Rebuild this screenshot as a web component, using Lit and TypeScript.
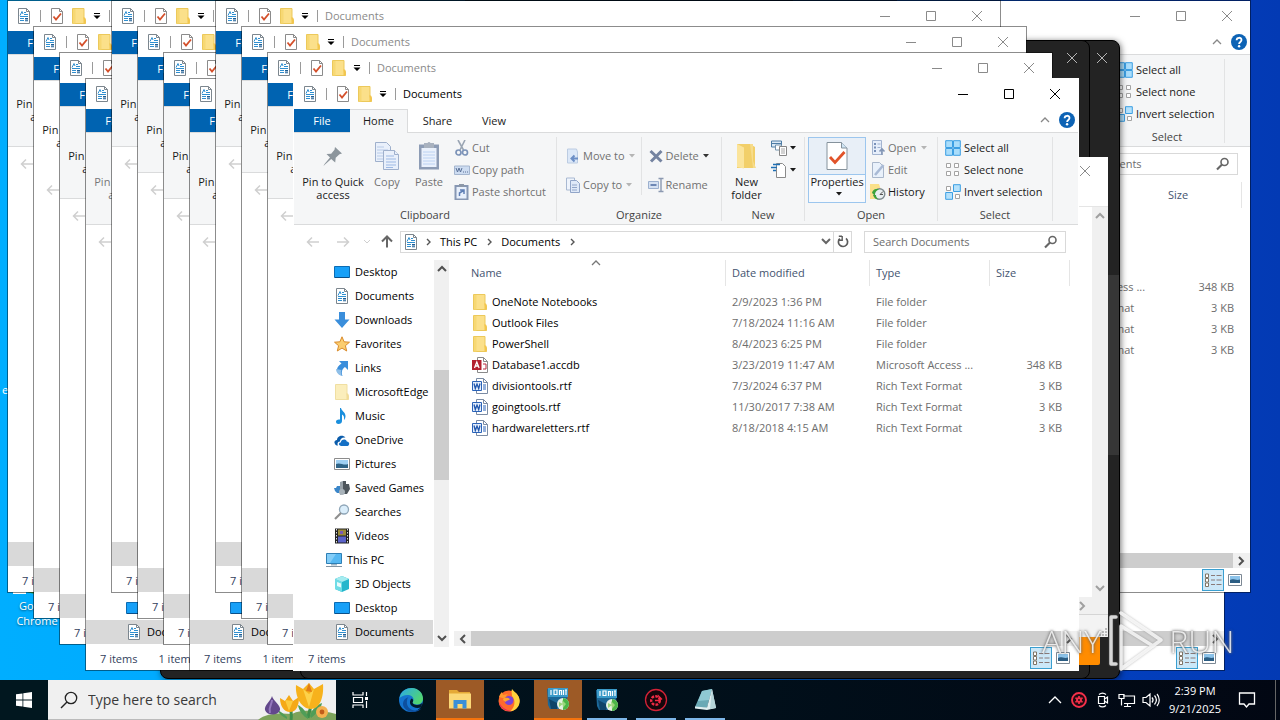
import { LitElement, html, svg, css, nothing } from "lit";
import { customElement, property } from "lit/decorators.js";
import { classMap } from "lit/directives/class-map.js";
import { styleMap } from "lit/directives/style-map.js";

/* ---------- icons ---------- */

const glyphs: Record<string, [number, number, any]> = {
  doc: [16, 16, svg`<path d="M2.5.5h8l3 3v12h-11z" fill="#fff" stroke="#7c868e"/><path d="M10.500.5v3h3" fill="none" stroke="#7c868e"/><path d="M4 7.500l2-4 1 2.500M8 4.500h2M8 6.500h4M4 8.500h8M4 10.500h4M4 12.500h4" fill="none" stroke="#2f8fd0"/><path d="M9 10h3v1.500H9zM9 12.300h3v1H9z" fill="#1d5d94"/>`],
  check: [16, 16, svg`<path d="M2.500.5h8l3 3v12h-11z" fill="#fff" stroke="#8b8b8b"/><path d="M10.500.5v3h3" fill="none" stroke="#8b8b8b"/><path d="M4.500 8.500L7 11.500l5-6" fill="none" stroke="#d4502b" stroke-width="1.800"/>`],
  folder: [16, 16, svg`<path d="M1.500.5H13v11h1.500v4h-13z" fill="#fbe08a" stroke="#ecc95b"/><path d="M12.500 9v6.500h2V10z" fill="#f3c64d"/><path d="M2 1h2.500v14.500H2z" fill="#f7d873"/>`],
  folderPale: [16, 16, svg`<path d="M1.500.5H13v11h1.500v4h-13z" fill="#fbeebc" stroke="#f0dfa2"/><path d="M12.500 9v6.500h2V10z" fill="#f1dc98"/>`],
  qatCaret: [8, 6, svg`<path d="M1 0h6v1H1zM.5 2.500h7L4 6z" fill="currentColor"/>`],
  caret: [6, 4, svg`<path d="M0 0h6L3 3.500z" fill="currentColor"/>`],
  min: [12, 12, svg`<path d="M1 6.500h10" stroke="currentColor"/>`],
  max: [12, 12, svg`<path d="M1.500 1.500h9v9h-9z" fill="none" stroke="currentColor"/>`],
  close: [12, 12, svg`<path d="M1 1l10 10M11 1L1 11" stroke="currentColor"/>`],
  up: [10, 6, svg`<path d="M1 5l4-4 4 4" fill="none" stroke="currentColor" stroke-width="1.300"/>`],
  down: [10, 7, svg`<path d="M1 1l4 4 4-4" fill="none" stroke="currentColor" stroke-width="2"/>`],
  upBold: [10, 7, svg`<path d="M1 6l4-4 4 4" fill="none" stroke="currentColor" stroke-width="2"/>`],
  left: [7, 10, svg`<path d="M6 1L2 5l4 4" fill="none" stroke="currentColor" stroke-width="2"/>`],
  right: [7, 10, svg`<path d="M1 1l4 4-4 4" fill="none" stroke="currentColor" stroke-width="2"/>`],
  crumb: [5, 8, svg`<path d="M1 1l3 3-3 3" fill="none" stroke="#555" stroke-width="1.400"/>`],
  help: [16, 16, svg`<circle cx="8" cy="8" r="8" fill="#0d63b5"/><path d="M5.600 6.200C5.600 3 10.500 3 10.500 6c0 2-2.400 1.900-2.400 4" fill="none" stroke="#fff" stroke-width="1.800"/><circle cx="8.100" cy="12.300" r="1.200" fill="#fff"/>`],
  pin: [22, 22, svg`<path d="M13 2l7 6.500-2.500.8-3.800 3.500-.5 4.700-4-3.600L3 19.500 1.500 21l1-2L8 12.500 4.500 9l4.700-.3 3.300-4z" fill="#8c959c"/>`],
  copy: [26, 28, svg`<g stroke="#9fb0cc" fill="#e9f0fb"><path d="M1.500.5h11l4 4v15h-15z"/><path d="M3 5h7M3 8h11M3 11h11M3 14h11M3 17h8" stroke="#b8cbe8"/><path d="M9.500 8.500h11l4 4v15h-15z"/><path d="M20.500 8.500v4h4"/><path d="M12 14h8M12 17h10M12 20h10M12 23h10M12 25.500h7" stroke="#9db9e4"/></g>`],
  paste: [22, 30, svg`<path d="M1 3.500h20v25H1z" fill="#8d9cb5"/><path d="M3.500 7h15v19h-15z" fill="#eaf1fc"/><path d="M6 2h3.500a1.700 1.700 0 013 0H16v5H6z" fill="#a9b2bf"/><path d="M5 11h12M5 14h12M5 17h12M5 20h12M5 23h12" stroke="#bcd2f2"/>`],
  cut: [16, 16, svg`<path d="M4 0l5.500 10M11 0L6 10" stroke="#9aa5b3" stroke-width="1.600"/><circle cx="4.500" cy="12.500" r="2.500" fill="none" stroke="#7c93b8" stroke-width="1.700"/><circle cx="11" cy="12.500" r="2.500" fill="none" stroke="#7c93b8" stroke-width="1.700"/>`],
  copyPath: [16, 16, svg`<path d="M.5 4h15v8.500H.5z" fill="#cddcf1" stroke="#a5b6cf"/><path d="M2 6l1.500 4L5 6l1.500 4L8 6" fill="none" stroke="#5a7197"/><path d="M9 10h5" stroke="#5a7197" stroke-dasharray="1 1"/>`],
  pasteShortcut: [16, 16, svg`<path d="M1.500 2h12v13.500h-12z" fill="#e8f0fc" stroke="#8797b3" stroke-width="2"/><path d="M5 0h5v3H5z" fill="#8d98a8"/><path d="M5.500 12V9l4-2.500M6 6h4v4" fill="none" stroke="#5f7fb5" stroke-width="1.500"/>`],
  moveTo: [16, 16, svg`<path d="M2.500 1h9l1 3v11h-10z" fill="#dce8f8" stroke="#bccce2"/><path d="M13 10.500H7M9.500 7.500l-3 3 3 3" fill="none" stroke="#6d8fc6" stroke-width="2"/>`],
  copyTo: [16, 16, svg`<path d="M1.500 1h8v12h-8z" fill="#eff4fc" stroke="#a9b9d2"/><path d="M5.500 3.500h6l3 3v9h-9z" fill="#dfe9f8" stroke="#91a5c8"/><path d="M7 8h5M7 10.500h5M7 13h5" stroke="#91a5c8"/>`],
  del: [16, 16, svg`<path d="M2.500 3l11 10.500M13.500 3L3 13.500" stroke="#7483a0" stroke-width="3"/>`],
  rename: [16, 16, svg`<path d="M.5 4.500h10v7H.500z" fill="#d5e1f2" stroke="#9cb0cf"/><path d="M2.500 8h6" stroke="#6d87b5" stroke-width="2"/><path d="M10.500 1.500h5M13 1.500v13M10.500 14.500h5" stroke="#8b99b1" fill="none" stroke-width="1.400"/>`],
  newFolder: [22, 26, svg`<path d="M1 1h13l5 3v21H1z" fill="#f2cf69"/><path d="M1 1l7 3.500v21L1 24z" fill="#fbe49b"/><path d="M14 1h3v17l3 7h-3z" fill="#f7dc8b"/>`],
  newItem: [16, 16, svg`<path d="M.5 1h10v6H.500z" fill="#dce9f5" stroke="#4d7ca5"/><path d="M1 3.500h9" stroke="#4d7ca5"/><path d="M4.500 5h6v5h-6z" fill="#fff" stroke="#7493ad"/><path d="M8.500 6.500h7v9h-7z" fill="#fff" stroke="#868686"/><path d="M10 9h4M10 11h4M10 13h4" stroke="#a5a5a5"/>`],
  easyAccess: [16, 16, svg`<path d="M5.500 1.500h6l3 3v11h-9z" fill="#fff" stroke="#8a8a8a"/><path d="M2 2.500h7M0 5.500h6M2 8.500h3" stroke="#1e6fb5" stroke-width="1.500"/>`],
  checkBig: [22, 28, svg`<path d="M1 .5h14.500L21 6v21.500H1z" fill="#fff" stroke="#85929c"/><path d="M15.500.5V6H21" fill="#cfe5f5" stroke="#85929c"/><path d="M4 15l5 5.500L18.500 10" fill="none" stroke="#e1532a" stroke-width="2.800"/>`],
  open: [16, 16, svg`<path d="M2.500.5h9v14h-9z" fill="#e6eefa" stroke="#a3b4d0"/><path d="M4 3h2v2H4zM4 6.500h2v2H4zM4 10h2v2H4z" fill="#7890b8"/><path d="M7.500 4h3M7.500 7.500h3" stroke="#9eb1cf"/><path d="M12 15V9.500M9.500 11.500L12 9l2.500 2.500" stroke="#8396b5" stroke-width="1.600" fill="none"/>`],
  edit: [16, 16, svg`<path d="M2.500.5h7l4 4v11h-11z" fill="#e9f1fb" stroke="#a9b7cb"/><path d="M5 13L13.500 3" stroke="#a9bad5" stroke-width="2.600"/>`],
  history: [16, 16, svg`<path d="M0 0h9l2 6v9H0z" fill="#fae089"/><circle cx="9.500" cy="10" r="5.300" fill="#e9eef0" stroke="#7e8a8f" stroke-width="1.400"/><path d="M10 10.500l3-3M10 10.500h3" stroke="#555"/><path d="M2 9l3 2.500c0-4 1.500-5 4-6C5 4 2.500 6 2 9zM3 11c1 3 3 4.500 6 4.500-2-1-3-2.500-3-4.500z" fill="#3da33b"/>`],
  selAll: [16, 16, svg`<g fill="#a9ddfb" stroke="#3c9fe3"><path d="M.7.7h6.800v6.800H.7zM8.500.7h6.800v6.800H8.500zM.7 8.500h6.800v6.800H.7zM8.500 8.500h6.800v6.800H8.500z"/></g>`],
  selNone: [16, 16, svg`<g fill="#fff" stroke="#a3a3a3"><path d="M1.500 1.500h4v4h-4zM9.500 1.500h4v4h-4zM1.500 9.500h4v4h-4zM9.500 9.500h4v4h-4z"/></g>`],
  selInv: [16, 16, svg`<g fill="#b5e1fb" stroke="#3c9fe3"><path d="M8.500.7h6.800v6.800H8.500zM.7 8.500h6.800v6.800H.7z"/></g><g fill="#fff" stroke="#a3a3a3"><path d="M1.500 2.500h4v4h-4zM10.500 10.500h4v4h-4z"/></g>`],
  back: [14, 12, svg`<path d="M13 6H1.500M6 1.500L1.500 6 6 10.500" fill="none" stroke="#cfcfcf" stroke-width="1.500"/>`],
  fwd: [14, 12, svg`<path d="M1 6h11.500M8 1.500L12.500 6 8 10.500" fill="none" stroke="#cfcfcf" stroke-width="1.500"/>`],
  upDir: [12, 13, svg`<path d="M6 12.500V1.500M1 6.500l5-5 5 5" fill="none" stroke="#666" stroke-width="2"/>`],
  recent: [8, 5, svg`<path d="M1 1l3 3 3-3" fill="none" stroke="#cfcfcf"/>`],
  refresh: [12, 14, svg`<path d="M2.800 3.600A4.600 4.600 0 109 3.400" fill="none" stroke="#5c5c5c" stroke-width="1.700"/><path d="M5 1.200H1.800M5.200 1v4.300H1" fill="none" stroke="#5c5c5c" stroke-width="1.400"/>`],
  search: [14, 14, svg`<circle cx="8.500" cy="5" r="3.500" fill="none" stroke="#666" stroke-width="1.600"/><path d="M6 7.500L1 12.500" stroke="#666" stroke-width="2.200"/>`],
  desktop: [16, 16, svg`<path d="M.5 2.500h15v11H.5z" fill="#17a0f8" stroke="#0b6cb4"/><path d="M1 13.500h14" stroke="#0a4f88"/>`],
  downloads: [16, 16, svg`<path d="M5 0h6v7.500h4.500L8 16 .500 7.500H5z" fill="#3a8edb"/>`],
  star: [16, 16, svg`<path d="M8 .8l2.100 5 5.400.4-4.100 3.500 1.300 5.300L8 12.100 3.300 15l1.300-5.300L.5 6.200l5.400-.4z" fill="#fbcd6f" stroke="#d98b2b"/>`],
  link: [16, 16, svg`<path d="M5 1h9v9l-3-3c-3 2-4 5-2.500 9C2 14 .500 8 7.500 3.500z" fill="#3a8edb"/><path d="M2 9c0 3 2 6 6.500 7-2-2-2-4-1-6z" fill="#8fbfe8"/>`],
  music: [16, 16, svg`<path d="M7 0c.5 3 4.500 4 4.500 8 0 1.500-.5 3-1.500 4 .5-3-.5-5-2-5.500V13c0 2-1.500 3-3.500 3S2 14.800 2 13.500 3.500 11 6 11.500V0z" fill="#1a8fdd"/>`],
  onedrive: [16, 16, svg`<path d="M1 12c-1.500-2 0-4 2-4 0-4 5.500-6 8.500-2.500C8 5 6 7 6 9.500 3.500 9.500 3 12 4 13.500 2.500 13.500 1.500 13 1 12z" fill="#0b5cab"/><path d="M6 13.500c-2-1-1-3 .8-3C7 7 12 6.500 12.800 9.500c3 0 3.200 4 .7 4.500H7z" fill="#1570c5"/>`],
  pictures: [16, 16, svg`<path d="M.5 2.500h15v11H.5z" fill="#fff" stroke="#8c8c8c"/><path d="M2 4h12v8H2z" fill="#9fd0f3"/><path d="M2 8c4-2 8 2 12 0v4H2z" fill="#2f6487"/>`],
  games: [16, 16, svg`<path d="M9 1h3v3h3l1 5-3 5H8z" fill="#4e565c"/><path d="M6 2l3-1v13l-3 1z" fill="#98a1a8"/><path d="M0 8h2l1-2h3v7H3L1 11z" fill="#3a86c9"/><circle cx="8" cy="12" r="3" fill="#a9b3ba"/>`],
  searches: [16, 16, svg`<circle cx="10" cy="5.500" r="4.500" fill="#dbeefb" stroke="#8fa6b8" stroke-width="1.300"/><path d="M7 9l-6 6" stroke="#8f8f8f" stroke-width="2.200"/>`],
  videos: [16, 16, svg`<path d="M1 .5h14v15H1z" fill="#222"/><path d="M4 1.500h8v6H4z" fill="#9a8a3b"/><path d="M4 8.500h8v6H4z" fill="#5b63c9"/><path d="M6 3h3v3H6z" fill="#7a5bb5"/><path d="M2.500 1v14M13.500 1v14" stroke="#ddd" stroke-dasharray="1.500 1.500"/>`],
  pc: [16, 16, svg`<path d="M.5 1.500h15v10H.5z" fill="#56b8f2" stroke="#2e7fb5"/><path d="M1 2h9L4 11H1z" fill="#83cdf8"/><path d="M5 12h6v1.500H5z" fill="#9fb6c6"/><path d="M0 14.500h16" stroke="#8394a2"/>`],
  cube: [16, 16, svg`<path d="M1 3l7-3 7 3v10l-7 3-7-3z" fill="#25b6cc"/><path d="M1 3l7 3v10l-7-3z" fill="#6fdce6"/><path d="M1 3l7-3 7 3-7 3z" fill="#a5ecf0"/><path d="M3 6l4 1.500v4L3 10z" fill="#e8fbfc"/>`],
  access: [16, 16, svg`<path d="M5.500.5h6l4 4v11h-10z" fill="#fff" stroke="#8a8a8a"/><path d="M11.500.5v4h4" fill="none" stroke="#8a8a8a"/><path d="M11 7h3v5h-3" fill="none" stroke="#b5283c"/><path d="M0 3h9.500v10H0z" fill="#b3202f"/><path d="M2.500 11L4.800 5l2.300 6M3.400 9h2.800" fill="none" stroke="#fff" stroke-width="1.300"/>`],
  word: [16, 16, svg`<path d="M4.500.5h7l4 4v11h-11z" fill="#fff" stroke="#7b8ba3"/><path d="M11.500.5v4h4" fill="none" stroke="#7b8ba3"/><path d="M11 7h3M11 9h3M11 11h3" stroke="#2b63b8"/><path d="M.5 3.500h9v9h-9z" fill="#e6effb" stroke="#2b63b8"/><path d="M2 5.500l1.300 5L5 6l1.700 4.500L8 5.500" fill="none" stroke="#2057ae" stroke-width="1.300"/>`],
  details: [18, 14, svg`<path d="M1.500 1h3v3.500h-3zM1.500 5.500h3V9h-3zM1.500 10h3v3.500h-3z" fill="#fff" stroke="#7f7465"/><path d="M7 2.500h4M12.500 2.500h5M7 7h4M12.500 7h5M7 11.500h4M12.500 11.500h5" stroke="#8a7a78"/>`],
  thumbs: [14, 12, svg`<path d="M.5.5h13v11H.5z" fill="#fff" stroke="#7c8894"/><path d="M2 2h10v7H2z" fill="#8cc3ea"/><path d="M2 6c3-2 6 1 10-.5V9H2z" fill="#2b5d83"/>`],
  windows: [16, 16, svg`<path d="M0 2.300L6.500 1.400v6.100H0zM7.300 1.300L16 0v7.500H7.300zM0 8.400h6.500v6.200L0 13.700zM7.300 8.400H16V16l-8.700-1.300z" fill="#fff"/>`],
  lens: [18, 18, svg`<circle cx="11" cy="7" r="5.700" fill="none" stroke="#222" stroke-width="1.300"/><path d="M7 11l-6 6" stroke="#222" stroke-width="1.500"/>`],
  flowers: [78, 40, svg`<path d="M0 40c8-7 22-7 34-6 10-5 30-4 44 0v6z" fill="#7da35b"/><path d="M33 40c1-6 0-10-1-15M50 38c1-8 4-12 4-18" stroke="#3f8f4b" stroke-width="3" fill="none"/><path d="M29 37c-3-3-7-6-10-7 2 4 6 7 10 9zM50 37c-2-6-6-10-10-12 1 6 5 11 10 14zM52 36c2-7 7-11 12-13-1 6-6 11-11 15z" fill="#4f9d57"/><path d="M14 16c1 5 9 9 8 14-2 6-13 6-15 0-1-5 6-9 7-14z" fill="#63488c"/><path d="M14 20c0 5-4 7-2 13" stroke="#9478bd" stroke-width="2" fill="none"/><path d="M22 18l5 3 4-6 4 6 6-4c0 9-3 15-9 15s-10-6-10-14z" fill="#f5a917"/><path d="M27 20l4 11 4-10z" fill="#fccc3f"/><path d="M38 5l7 4 6-6 5 6 9-5c1 13-3 25-12 25S37 18 38 5z" fill="#f7b21c"/><path d="M45 9l6 18 5-18-5 5z" fill="#fdd24a"/><path d="M51 3l3 9-6-1z" fill="#e07b17"/><circle cx="64" cy="32" r="6" fill="#f4b14f"/><circle cx="64" cy="32" r="2.400" fill="#c05c1b"/>`],
  taskView: [18, 18, svg`<path d="M2 1v3h10V1M2 17v-3h10v3M2.500 6.500h9v5h-9zM15.500 1v4M15.500 10v7" fill="none" stroke="#fff" stroke-width="1.200"/><path d="M14 6h3v3h-3z" fill="#fff"/>`],
  edge: [26, 26, svg`<defs><linearGradient id="eg" x1="0" y1="0" x2="1" y2=".6"><stop offset="0" stop-color="#2aa9ea"/><stop offset="1" stop-color="#52d66f"/></linearGradient></defs><circle cx="13" cy="13" r="12" fill="#1474cf"/><path d="M1.500 11C3 3.500 9 .9 14 1c7 .3 11 5.500 11 10.500 0 4-3 6-6 6-2.500 0-4.500-1-4.500-2 0-.8 1-1.200 1-3 0-2.500-2.500-4.500-6-4.500-3.500 0-6.500 1.500-8 3z" fill="url(#eg)"/><path d="M9 14c-1 5 3 9.500 8 9.500 3 0 5-1 6.500-2.500-3 5-13 5.500-17 0-3-4-1.500-9 4-11C9.500 11 9 12.500 9 14z" fill="#0d4f9e"/><path d="M14.500 15.500c0 1 2 2.500 4.500 2.500 2 0 4-.7 5-2l-.5 4c-4 2-9 .5-11-2.500-1-2-.500-4.500 1-6 1.500.5 2 2 1.500 3z" fill="#021a2c"/>`],
  files: [24, 24, svg`<path d="M1 3h8l2 2h11v4H1z" fill="#e5a936"/><path d="M1 6.500h22v15H1z" fill="#fbd877"/><path d="M5.500 21.500V13h13v8.500h-4V17h-5v4.500z" fill="#3a8fd9"/>`],
  firefox: [24, 24, svg`<circle cx="12" cy="13" r="10.500" fill="#ff6a2b"/><path d="M15 1c2 3 7 5 7.700 11 .5 6-4 11-9.700 11.300C18 20 19 12 15 8c0-2-1-5 0-7z" fill="#ffd23c"/><path d="M2 9c1-3 2-4 3-5l1 3 5-1c-2 2-3 3-2 5z" fill="#ff9a2e"/><path d="M2 14c1 7 8 10 13 9-7-1-10-3-13-9z" fill="#e8245f"/><circle cx="12" cy="12.500" r="4.500" fill="#7a45d6"/><path d="M6 11c3-2 5-1 7 0-1 2-4 1-4 3-1-1-3-1-3-3z" fill="#ffa52e"/>`],
  tool: [24, 24, svg`<path d="M1 2h21l-1 13-2 7H4L2 18z" fill="#1c6797"/><path d="M2 1h20v9H2z" fill="#3a9ac9"/><path d="M5 3v5M8 3h3v4.500H8zM13.500 8V3.500h2V8M17.500 3v5M19 3h2M20 3v5" stroke="#fff" fill="none" stroke-width="1.200"/><path d="M3 12l8 4v6H5z" fill="#0e4468"/><circle cx="17" cy="17" r="6" fill="#e6f2e4"/><path d="M17 11a6 6 0 010 12z" fill="#4cb648"/><path d="M13 15l4 2-4 3zM16 13l4 4-3 4" fill="#9bd77c"/>`],
  gear: [24, 24, svg`<circle cx="12" cy="12" r="10.500" fill="#16060b" stroke="#d22237" stroke-width="1.300"/><circle cx="11.500" cy="12.500" r="4.300" fill="none" stroke="#f02a44" stroke-width="2.400" stroke-dasharray="2.700 1.200"/><path d="M11 12.500h5l-1-4 3 3" stroke="#f02a44" fill="none" stroke-width="1.400"/>`],
  notebook: [24, 24, svg`<path d="M9 3l10-2-5 19-12-1z" fill="#6aa9b5"/><path d="M9 3l10-2-3 11-11 1z" fill="#8fc9d3"/><path d="M19 1l4 19-9 2-12-1.500v-2l12 1z" fill="#dfeef0"/><path d="M19 1l4 19-6 1z" fill="#b4d3d8"/>`],
  trayUp: [14, 8, svg`<path d="M1 7l6-6 6 6" fill="none" stroke="#fff" stroke-width="1.300"/>`],
  trayRed: [16, 16, svg`<circle cx="8" cy="8" r="7" fill="#200a12" stroke="#f5304a" stroke-width="1.900"/><path d="M8 4l1 2.200 2.500-.3L10 8l1.500 2.100L9 9.800 8 12 7 9.800l-2.500.3L6 8 4.500 5.900l2.500.3z" fill="#f5304a" stroke="#f5304a"/><circle cx="8" cy="8" r="1" fill="#200a12"/>`],
  trayCam: [14, 16, svg`<path d="M2.500 4.500h6v7h-6zM8.500 7l3-2v6l-3-2M3 2.500C5 .8 8 .8 10 2.500M3 13.500c2 1.700 5 1.700 7 0" fill="none" stroke="#fff" stroke-width="1.200"/>`],
  trayNet: [18, 16, svg`<path d="M5 4h11.500v7.500H6M9.500 12v2.500M6 14.500h7M1 2.500h5v4H1zM3.500 6.500v7" fill="none" stroke="#fff" stroke-width="1.200"/>`],
  traySound: [18, 16, svg`<path d="M1 5.500h3l4-3.500v12l-4-3.500H1zM10 5.500c1.300 1.500 1.300 3.500 0 5M12.500 3.500c2.300 2.700 2.300 6.300 0 9M15 2c3 3.500 3 8.500 0 12" fill="none" stroke="#fff" stroke-width="1.200"/>`],
  notice: [18, 18, svg`<path d="M1.500 2h15v11h-5.500l-2.500 3-2.500-3H1.500z" fill="none" stroke="#fff" stroke-width="1.300"/>`],
  grip: [10, 10, svg`<path d="M7 1h2v2H7zM4 4h2v2H4zM7 4h2v2H7zM1 7h2v2H1zM4 7h2v2H4zM7 7h2v2H7z" fill="#bbb"/>`],
  chrome: [48, 48, svg`<circle cx="24" cy="24" r="24" fill="#2a9d4c"/><path d="M24 0a24 24 0 0121 12H24z" fill="#e33b2e"/><path d="M24 48a24 24 0 0021-36H24z" fill="#f8c51c"/><circle cx="24" cy="24" r="11" fill="#fff"/><circle cx="24" cy="24" r="9" fill="#3b7de0"/><path d="M0 44h13v4H0z" fill="#fff"/>`],
};

const icon = (name: string) => {
  const [w, h, body] = glyphs[name];
  return html`<svg width=${w} height=${h} viewBox="0 0 ${w} ${h}" aria-hidden="true">${body}</svg>`;
};

const base = css`
  * { box-sizing: border-box; }
  svg { display: block; flex: none; }
  button {
    display: flex; align-items: center; justify-content: center;
    border: 0; padding: 0; margin: 0; background: none;
    font: inherit; color: inherit; white-space: nowrap;
  }
  input { border: 0; padding: 0; margin: 0; background: none; font: inherit; outline: 0; min-width: 0; }
`;

/* ---------- data ---------- */

const places: [string, string][] = [
  ["desktop", "Desktop"], ["doc", "Documents"], ["downloads", "Downloads"], ["star", "Favorites"],
  ["link", "Links"], ["folderPale", "MicrosoftEdge"], ["music", "Music"], ["onedrive", "OneDrive"],
  ["pictures", "Pictures"], ["games", "Saved Games"], ["searches", "Searches"], ["videos", "Videos"],
  ["pc", "This PC"], ["cube", "3D Objects"], ["desktop", "Desktop"], ["doc", "Documents"],
];

const files: [string, string, string, string, string][] = [
  ["folder", "OneNote Notebooks", "2/9/2023 1:36 PM", "File folder", ""],
  ["folder", "Outlook Files", "7/18/2024 11:16 AM", "File folder", ""],
  ["folder", "PowerShell", "8/4/2023 6:25 PM", "File folder", ""],
  ["access", "Database1.accdb", "3/23/2019 11:47 AM", "Microsoft Access ...", "348 KB"],
  ["word", "divisiontools.rtf", "7/3/2024 6:37 PM", "Rich Text Format", "3 KB"],
  ["word", "goingtools.rtf", "11/30/2017 7:38 AM", "Rich Text Format", "3 KB"],
  ["word", "hardwareletters.rtf", "8/18/2018 4:15 AM", "Rich Text Format", "3 KB"],
];

/* ---------- file explorer window ---------- */

/* `cover` names the part of a background window that other windows leave uncovered. */
@customElement("explorer-window")
export class ExplorerWindow extends LitElement {
  @property({ type: Boolean, reflect: true }) active = false;
  @property({ type: Boolean, reflect: true }) plain = false;
  @property({ type: Boolean, reflect: true }) busy = false;
  @property({ type: Boolean, reflect: true }) selection = false;
  @property({ type: Boolean, reflect: true }) titled = false;
  @property({ reflect: true }) cover = "";

  static styles = [base, css`
    :host {
      display: flex; flex-direction: column; box-sizing: border-box; overflow: hidden;
      border: 1px solid rgba(0, 0, 0, .45); background: #fff; background-clip: padding-box;
      font: 11px/16px "Open Sans", "Noto Sans", sans-serif; color: #1a1a1a;
    }
    :host([active]) { border-color: #fff; }
    .title { display: flex; align-items: center; height: 30px; padding-left: 8px; color: #8a8a8a; }
    .title .sep { width: 1px; height: 12px; background: #9a9a9a; }
    .title .sep.a { margin: 0 8px; }
    .title .sep.b { margin-left: 8px; }
    .title .gap { width: 6px; }
    .title .qat { color: #000; margin-left: 6px; }
    .title .name { flex: 1; margin-left: 7px; }
    .title button.win { width: 46px; height: 30px; }
    :host([active]) .title { color: #000; }

    .tabs { display: flex; height: 24px; border-bottom: 1px solid #dadbdc; }
    .tabs button { width: 59px; height: 23px; }
    .tabs .file { width: 56px; background: #0063b1; color: #fff; }
    .tabs .home { width: 58px; height: 24px; padding-bottom: 2px; background: #f5f6f7; border: 1px solid #dadbdc; border-bottom: 0; border-left: 0; }
    .tabs .view { width: 54px; }
    .tabs .end { margin-left: auto; height: 22px; gap: 9px; display: flex; align-items: center; padding-right: 3px; color: #888; }

    .ribbon { display: flex; height: 92px; padding: 4px 0 0; background: #f5f6f7; border-bottom: 1px solid #dadbdc; }
    :host([plain]) .ribbon { background: #fff; border-color: #fff; }
    :host([busy]) .pin { color: #777; }
    .group { display: flex; flex-direction: column; height: 84px; border-right: 1px solid #e2e3e4; }
    .group .body { display: flex; flex: none; height: 66px; }
    .group .label { text-align: center; color: #444; padding-top: 4px; }
    .clip { width: 263px; } .org { width: 165px; } .new { width: 83px; } .opn { width: 133px; } .sel { width: 115px; }
    .clip .body { padding-left: 6px; }
    .big { flex-direction: column; justify-content: flex-start; line-height: 13px; height: 66px; }
    .big .pic { height: 38px; display: flex; align-items: center; justify-content: center; }
    .big.pin { width: 66px; } .big.copy { width: 42px; } .big.paste { width: 42px; }
    .stack { display: flex; flex-direction: column; }
    .stack button { height: 22px; justify-content: flex-start; gap: 3px; }
    .clip .stack { margin-left: 4px; }
    .off { color: #717171; }
    .org .body { padding-left: 8px; }
    .org .stack { padding-top: 4px; }
    .org .stack button { height: 29px; line-height: 29px; gap: 2px; }
    .org .stack + .stack { margin-left: 6px; padding-left: 6px; border-left: 1px solid #e2e3e4; height: 58px; }
    .org .caret { margin-left: 2px; }
    .pale { color: #b5b5b5; }
    .dark { color: #333; }
    .new .big { width: 49px; }
    .new .stack button { gap: 3px; }
    .opn .body { padding-left: 3px; }
    .props { width: 58px; border: 1px solid #9cc6ee; background: #f7f9fc; }
    .props .pic { width: 56px; height: 37px; background: #e8eff7; border-bottom: 1px solid #9cc6ee; }
    .props .caret { margin-top: 4px; }
    .opn .stack { margin-left: 4px; }
    .opn .stack button, .clip .stack button { gap: 2px; }
    .opn .caret { margin-left: 3px; }
    .sel .stack { margin-left: 7px; }

    .bar { display: flex; align-items: center; height: 35px; padding: 0 12px 2px; }
    .bar .nav { display: flex; align-items: center; gap: 16px; width: 94px; }
    .bar .nav button:nth-child(3) { margin: 0 -6px 0 -3px; }
    .address { display: flex; align-items: center; flex: 1; height: 22px; border: 1px solid #d9d9d9; color: #000; }
    .address .doc { margin: 0 7px 0 2px; }
    .address .crumb { gap: 9px; margin-right: 10px; }
    .address .drop { margin-left: auto; margin-right: 2px; color: #666; }
    .address .reload { width: 18px; height: 20px; border-left: 1px solid #d9d9d9; }
    .find { display: flex; align-items: center; width: 202px; height: 22px; margin-left: 12px; padding: 0 7px 0 8px; border: 1px solid #d9d9d9; }
    .find input { flex: 1; color: #666; }
    .find input::placeholder { color: #6d6d6d; opacity: 1; }

    .panes { display: flex; flex: 1; min-height: 0; }
    .tree { width: 139px; margin: 0; padding: 0; list-style: none; overflow: hidden; color: #000; }
    .tree li { display: flex; align-items: center; gap: 5px; height: 24px; padding-left: 40px; white-space: nowrap; }
    .tree li.root { padding-left: 32px; }
    .tree li.on { background: #d9d9d9; }
    .vscroll { display: flex; flex-direction: column; align-items: center; width: 15px; margin-left: 1px; padding: 5px 0; background: #f0f0f0; color: #505050; }
    .vscroll .thumb { width: 15px; height: 110px; margin-top: 98px; background: #cdcdcd; }
    .vscroll svg:last-child { margin-top: auto; }
    .list { display: flex; flex-direction: column; flex: 1; min-width: 0; margin-left: 5px; padding-bottom: 1px; }
    .rows { flex: 1; padding-left: 11px; }
    table { table-layout: fixed; border-collapse: collapse; width: 605px; }
    col.c1 { width: 261px; } col.c2 { width: 144px; } col.c3 { width: 120px; } col.c4 { width: 80px; }
    th { padding: 0 0 5px; font-weight: 400; text-align: left; color: #44546f; position: relative; }
    th div { height: 26px; padding-left: 6px; line-height: 26px; border-right: 1px solid #e5e5e5; }
    th svg { position: absolute; left: calc(50% - 5px); top: 0; color: #777; }
    td { height: 21px; padding: 0 0 0 6px; color: #6d6d6d; white-space: nowrap; overflow: hidden; }
    td.n { color: #000; padding-left: 7px; }
    td.n span { display: flex; align-items: center; gap: 4px; }
    td.s { text-align: right; padding-right: 8px; }
    .hscroll { display: flex; height: 15px; background: #f0f0f0; color: #505050; }
    .hscroll .thumb { flex: 1; background: #cdcdcd; }
    .hscroll button { width: 17px; }
    .status { display: flex; height: 23px; padding: 0 8px 0 14px; color: #33415c; line-height: 23px; }
    .status .one { margin-left: 21px; white-space: nowrap; }
    .status .views { display: flex; margin-left: auto; gap: 4px; }
    .status .views button { height: 22px; }
    .status .on { width: 22px; background: #cce8f8; border: 1px solid #3a9fd0; }

    :host([cover="left"]:not([titled])) .name,
    :host([cover="left"]) .tabs button:not(.file),
    :host([cover="left"]) .group:not(.clip),
    :host([cover="left"]) .clip .label,
    :host([cover="left"]) .clip .off,
    :host([cover="left"]) .address,
    :host([cover="left"]) .find,
    :host([cover="left"]) .list,
    :host([cover="left"]) .tree span,
    :host([cover="right"]) .name,
    :host([cover="right"]) .tabs button,
    :host([cover="right"]) .group:not(.sel) > *,
    :host([cover="right"]) .address,
    :host([cover="right"]) .tree,
    :host([cover="right"]) th:nth-child(-n + 3),
    :host([cover="right"]) td:nth-child(-n + 2),
    :host([cover="right"]) tr:nth-child(-n + 3) td,
    :host([cover="right"]) .count,
    :host([cover="foot"]) .name,
    :host([cover="foot"]) .tabs,
    :host([cover="foot"]) .ribbon,
    :host([cover="foot"]) .bar,
    :host([cover="foot"]) .tree,
    :host([cover="foot"]) .rows,
    :host([cover="foot"]) .count { visibility: hidden; }
    :host([cover="left"][selection]) .tree .on span { visibility: visible; }
  `];

  private ribbon() {
    return html`
      <div class="ribbon">
        <section class="group clip">
          <div class="body">
            <button class="big pin"><span class="pic">${icon("pin")}</span>Pin to Quick<br />access</button>
            <button class="big copy off"><span class="pic">${icon("copy")}</span>Copy</button>
            <button class="big paste off"><span class="pic">${icon("paste")}</span>Paste</button>
            <div class="stack off">
              <button>${icon("cut")}Cut</button>
              <button>${icon("copyPath")}Copy path</button>
              <button>${icon("pasteShortcut")}Paste shortcut</button>
            </div>
          </div>
          <div class="label">Clipboard</div>
        </section>
        <section class="group org">
          <div class="body off">
            <div class="stack">
              <button>${icon("moveTo")}Move to<span class="caret pale">${icon("caret")}</span></button>
              <button>${icon("copyTo")}Copy to<span class="caret pale">${icon("caret")}</span></button>
            </div>
            <div class="stack">
              <button>${icon("del")}Delete<span class="caret dark">${icon("caret")}</span></button>
              <button>${icon("rename")}Rename</button>
            </div>
          </div>
          <div class="label">Organize</div>
        </section>
        <section class="group new">
          <div class="body">
            <button class="big"><span class="pic">${icon("newFolder")}</span>New<br />folder</button>
            <div class="stack">
              <button aria-label="New item">${icon("newItem")}${icon("caret")}</button>
              <button aria-label="Easy access">${icon("easyAccess")}${icon("caret")}</button>
            </div>
          </div>
          <div class="label">New</div>
        </section>
        <section class="group opn">
          <div class="body">
            <button class="big props"><span class="pic">${icon("checkBig")}</span><span>Properties</span><span class="caret">${icon("caret")}</span></button>
            <div class="stack">
              <button class="off">${icon("open")}Open<span class="caret pale">${icon("caret")}</span></button>
              <button class="off">${icon("edit")}Edit</button>
              <button>${icon("history")}History</button>
            </div>
          </div>
          <div class="label">Open</div>
        </section>
        <section class="group sel">
          <div class="body">
            <div class="stack">
              <button>${icon("selAll")}Select all</button>
              <button>${icon("selNone")}Select none</button>
              <button>${icon("selInv")}Invert selection</button>
            </div>
          </div>
          <div class="label">Select</div>
        </section>
      </div>`;
  }

  render() {
    return html`
      <header class="title">
        ${icon("doc")}<span class="sep a"></span>${icon("check")}<span class="gap"></span>${icon("folder")}
        <button class="qat" aria-label="Customize">${icon("qatCaret")}</button><span class="sep b"></span>
        <span class="name">Documents</span>
        <button class="win" aria-label="Minimize">${icon("min")}</button>
        <button class="win" aria-label="Maximize">${icon("max")}</button>
        <button class="win" aria-label="Close">${icon("close")}</button>
      </header>
      <nav class="tabs">
        <button class="file">File</button><button class="home">Home</button>
        <button>Share</button><button class="view">View</button>
        <span class="end">${icon("up")}${icon("help")}</span>
      </nav>
      ${this.ribbon()}
      <div class="bar">
        <div class="nav">
          <button aria-label="Back">${icon("back")}</button>
          <button aria-label="Forward">${icon("fwd")}</button>
          <button aria-label="Recent">${icon("recent")}</button>
          <button aria-label="Up">${icon("upDir")}</button>
        </div>
        <div class="address">
          <span class="doc">${icon("doc")}</span>
          <button class="crumb">${icon("crumb")}This PC</button>
          <button class="crumb">${icon("crumb")}Documents</button>
          ${icon("crumb")}
          <button class="drop" aria-label="Previous locations">${icon("down")}</button>
          <button class="reload" aria-label="Refresh">${icon("refresh")}</button>
        </div>
        <label class="find"><input type="text" aria-label="Search Documents" placeholder="Search Documents" />${icon("search")}</label>
      </div>
      <div class="panes">
        <ul class="tree">
          ${places.map(([i, name], n) => html`
            <li class=${classMap({ root: i === "pc", on: n === places.length - 1 })}>${icon(i)}<span>${name}</span></li>`)}
        </ul>
        <div class="vscroll">${icon("upBold")}<span class="thumb"></span>${icon("down")}</div>
        <div class="list">
          <div class="rows">
            <table>
              <colgroup><col class="c1" /><col class="c2" /><col class="c3" /><col class="c4" /></colgroup>
              <thead><tr>
                <th><div>Name</div>${icon("up")}</th>
                <th><div>Date modified</div></th><th><div>Type</div></th><th><div>Size</div></th>
              </tr></thead>
              <tbody>
                ${files.map(([i, name, date, type, size]) => html`<tr>
                  <td class="n"><span>${icon(i)}${name}</span></td><td>${date}</td><td>${type}</td><td class="s">${size}</td>
                </tr>`)}
              </tbody>
            </table>
          </div>
          <div class="hscroll">
            <button aria-label="Scroll left">${icon("left")}</button><span class="thumb"></span>
            <button aria-label="Scroll right">${icon("right")}</button>
          </div>
        </div>
      </div>
      <footer class="status">
        <span class="count">7 items</span>${this.selection ? html`<span class="one">1 item selected</span>` : nothing}
        <span class="views">
          <button class="on" aria-label="Details">${icon("details")}</button>
          <button aria-label="Thumbnails">${icon("thumbs")}</button>
        </span>
      </footer>`;
  }
}

/* ---------- taskbar ---------- */

@customElement("task-bar")
export class TaskBar extends LitElement {
  static styles = [base, css`
    :host {
      display: flex; height: 40px; background: linear-gradient(90deg, #01171f, #010f1a 60%, #020713);
      color: #fff; font: 12px/18px "Open Sans", "Noto Sans", sans-serif;
    }
    .start { width: 48px; background: #01171f; }
    .search { display: flex; align-items: center; width: 288px; padding-left: 12px; background: #f0f0f0; border-bottom: 1px solid #bbb; }
    .search input { flex: 1; margin-left: 10px; font-size: 14px; color: #333; }
    .search input::placeholder { color: #3a3a3a; opacity: 1; }
    .view { width: 48px; margin-right: 3px; }
    .apps { display: flex; gap: 1px; flex: 1; }
    .app { width: 48px; position: relative; }
    .app.alert { background: #9d5a26; border-bottom: 2px solid #f5730d; }
    .app.run::after { content: ""; position: absolute; left: 4px; right: 4px; bottom: 0; height: 2px; background: #7db6e8; }
    .tray { display: flex; }
    .tray .state { width: 24px; }
    .tray .clock { width: 64px; flex-direction: column; font-size: 11px; }
    .tray .notice { width: 40px; }
    .tray .peek { width: 5px; margin-left: 8px; border-left: 1px solid #666; }
  `];

  render() {
    const apps: [string, string, string][] = [
      ["edge", "", "Edge"], ["files", "alert", "File Explorer"], ["firefox", "", "Firefox"], ["tool", "alert", "Tool"],
      ["tool", "run", "Tool"], ["gear", "run", "Monitor"], ["notebook", "run", "Notes"],
    ];
    return html`
      <button class="start" aria-label="Start">${icon("windows")}</button>
      <label class="search">${icon("lens")}<input type="text" aria-label="Search" placeholder="Type here to search" />${icon("flowers")}</label>
      <button class="view" aria-label="Task view">${icon("taskView")}</button>
      <div class="apps">
        ${apps.map(([i, mode, label]) => html`<button class="app ${mode}" aria-label=${label}>${icon(i)}</button>`)}
      </div>
      <div class="tray">
        ${["trayUp", "trayRed", "trayCam", "trayNet", "traySound"].map((i) => html`<button class="state" aria-label="Status">${icon(i)}</button>`)}
        <button class="clock"><span>2:39 PM</span><span>9/21/2025</span></button>
        <button class="notice" aria-label="Notifications">${icon("notice")}</button>
        <button class="peek" aria-label="Show desktop"></button>
      </div>`;
  }
}

/* ---------- desktop ---------- */

interface Win { x: number; y: number; cover?: string; active?: boolean; plain?: boolean; busy?: boolean; selection?: boolean; titled?: boolean }

const rear: Win[] = [{ x: 439, y: 78, cover: "foot" }, { x: 465, y: 0, cover: "right" }];
const cascade: Win[] = Array.from({ length: 12 }, (_, n) => ({
  x: 7 + n * 26,
  y: (n % 4) * 26,
  cover: n === 11 ? "" : "left",
  active: n === 11,
  plain: n === 1,
  busy: n === 3,
  selection: n === 3 || n === 7,
  titled: n > 7,
}));

@customElement("app-root")
export class AppRoot extends LitElement {
  static styles = [base, css`
    :host {
      display: grid; grid-template-rows: 1fr auto; height: 100vh; overflow: hidden;
      font: 11px/15px "Open Sans", "Noto Sans", sans-serif;
    }
    .desk { position: relative; overflow: hidden; background: linear-gradient(90deg, #00aeff 0, #00aaff 16%, #0340be 85%, #033ab4); }
    explorer-window { position: absolute; width: 786px; height: 593px; }
    .shortcut { position: absolute; left: 0; top: 546px; width: 74px; display: flex; flex-direction: column; align-items: center; gap: 4px; color: #fff; text-align: center; text-shadow: 0 1px 2px rgba(0, 0, 0, .5); }
    .stray { position: absolute; left: 2px; top: 382px; color: #fff; }
    .dark { position: absolute; top: 40px; height: 639px; border: 1px solid #000; border-radius: 8px; background: #232323; color: #b5b5b5; }
    .dark.outer { left: 160px; width: 960px; box-shadow: 1px 1px 6px rgba(0, 0, 0, .55); }
    .dark.inner { left: 300px; width: 790px; }
    .dark button { margin: 11px 11px 0 auto; width: 12px; height: 12px; }
    .dark .track { width: 12px; height: 180px; margin: 211px 0 0 auto; background: #363636; }
    .orange { position: absolute; left: 1040px; top: 632px; width: 60px; height: 33px; border-radius: 2px; background: #ff8c00; }
    .pane { position: absolute; left: 620px; top: 157px; width: 488px; height: 480px; display: flex; flex-direction: column; background: #fff; color: #8a8a8a; }
    .pane .head { display: flex; justify-content: flex-end; height: 50px; padding: 8px 17px; border-bottom: 1px solid #e5e5e5; }
    .pane .head button { width: 12px; height: 12px; }
    .pane .mid { flex: 1; display: flex; justify-content: flex-end; }
    .pane .vs { display: flex; flex-direction: column; justify-content: space-between; align-items: center; width: 16px; padding: 5px 0; background: #f0f0f0; color: #a0a0a0; }
    .pane .hs { display: flex; justify-content: flex-end; align-items: center; height: 17px; padding-right: 22px; background: #f0f0f0; color: #a0a0a0; }
    .pane .foot { display: flex; justify-content: flex-end; align-items: flex-end; height: 23px; border-top: 1px solid #d5d5d5; background: #f3f3f3; }
    .mark { position: absolute; left: 1042px; top: 610px; display: flex; align-items: center; gap: 6px; height: 62px; color: rgba(255, 255, 255, .8); font: 300 32px/62px "Open Sans", sans-serif; text-shadow: 0 0 3px rgba(90, 90, 90, .8); filter: drop-shadow(0 0 1px rgba(110, 110, 110, .6)); }
  `];

  private win(w: Win) {
    return html`<explorer-window style=${styleMap({ left: `${w.x}px`, top: `${w.y}px` })} cover=${w.cover ?? ""}
      ?active=${w.active} ?plain=${w.plain} ?busy=${w.busy} ?selection=${w.selection} ?titled=${w.titled}></explorer-window>`;
  }

  render() {
    return html`
      <main class="desk">
        <div class="shortcut">${icon("chrome")}<span>Google<br />Chrome</span></div>
        <span class="stray">e</span>
        ${rear.map((w) => this.win(w))}
        <div class="dark outer"><button aria-label="Close">${icon("close")}</button><div class="track"></div></div>
        <div class="dark inner"><button aria-label="Close">${icon("close")}</button></div>
        <div class="orange"></div>
        <div class="pane">
          <div class="head"><button aria-label="Close">${icon("close")}</button></div>
          <div class="mid"><div class="vs">${icon("upBold")}${icon("down")}</div></div>
          <div class="hs">${icon("right")}</div>
          <div class="foot">${icon("grip")}</div>
        </div>
        ${cascade.map((w) => this.win(w))}
        <div class="mark">
          <span>ANY</span>
          <svg width="56" height="62" viewBox="0 0 56 62">
            <path d="M9 7H4v47h5M14 3l40 27-40 29V16l32 20" fill="none" stroke="currentColor" stroke-width="3.500" stroke-linejoin="round" stroke-linecap="round"/>
          </svg>
          <span>RUN</span>
        </div>
      </main>
      <task-bar></task-bar>`;
  }
}
